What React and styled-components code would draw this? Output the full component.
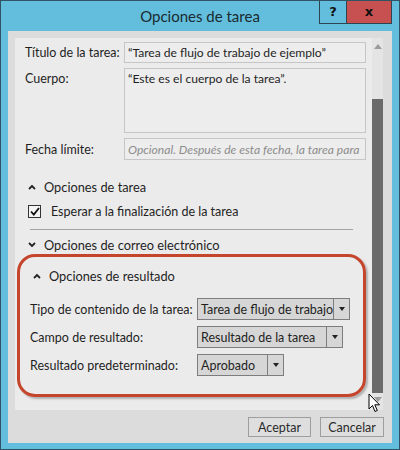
import React from "react";
import styled, { createGlobalStyle } from "styled-components";

const GlobalStyle = createGlobalStyle`
  html, body {
    margin: 0;
    padding: 0;
    background: #ffffff;
  }
  * {
    box-sizing: border-box;
  }
`;

const Window = styled.div`
  position: relative;
  width: 400px;
  height: 450px;
  background: #62bedc;
  border: 1px solid #2f5564;
  display: flex;
  flex-direction: column;
  font-family: Lato, "Open Sans", sans-serif;
  color: #1f1f1f;
  overflow: hidden;
`;

const TitleBar = styled.div`
  height: 30px;
  display: grid;
  grid-template-columns: 1fr auto 1fr;
  align-items: start;
`;

const Title = styled.div`
  grid-column: 2;
  font-size: 15px;
  line-height: 30px;
  color: #1a2a30;
`;

const Controls = styled.div`
  grid-column: 3;
  justify-self: end;
  display: flex;
  margin-right: 7px;
  margin-top: -1px;
`;

const CtrlButton = styled.div`
  width: ${({ $w }) => $w}px;
  height: 24px;
  background: ${({ $bg }) => $bg};
  border: 1px solid #2d4550;
  border-top: none;
  margin-left: -1px;
  display: flex;
  align-items: center;
  justify-content: center;
  font-family: "DejaVu Sans", sans-serif;
  font-weight: bold;
  font-size: 13px;
  color: #111;
`;

const Client = styled.div`
  flex: 1;
  margin: 0 7px 6px 7px;
  background: #dcdcdc;
  display: flex;
  flex-direction: column;
`;

const ContentArea = styled.div`
  display: flex;
  padding: 7px 9px 0 7px;
  height: 379px;
`;

const Panel = styled.div`
  flex: 1;
  background: #ebebeb;
  padding: 4px 6px 0 10px;
  overflow: hidden;
  font-size: 12.5px;
`;

const Scrollbar = styled.div`
  width: 11px;
  background: #e4e4e4;
  display: flex;
  flex-direction: column;
  align-items: center;
`;

const ScrollArrow = styled.div`
  width: 0;
  height: 0;
  border-left: 4px solid transparent;
  border-right: 4px solid transparent;
  ${({ $down }) => ($down ? "border-top: 5px solid #9c9c9c;" : "border-bottom: 5px solid #9c9c9c;")}
  margin: ${({ $down }) => ($down ? "4px 0 0" : "6px 0 0")};
`;

const Thumb = styled.div`
  width: 11px;
  height: 294px;
  margin-top: 50px;
  background: #6a6a6a;
`;

const FormGrid = styled.div`
  display: grid;
  grid-template-columns: 99px 1fr;
  row-gap: 5px;
`;

const Label = styled.div`
  padding-top: ${({ $top }) => ($top ? "3px" : "0")};
  align-self: ${({ $top }) => ($top ? "start" : "center")};
  white-space: nowrap;
`;

const Field = styled.div`
  height: ${({ $h }) => $h}px;
  background: #ededed;
  border: 1px solid #c6c6c6;
  padding: ${({ $top }) => ($top ? "2px 3px" : "0 3px")};
  display: flex;
  align-items: ${({ $top }) => ($top ? "flex-start" : "center")};
  white-space: nowrap;
  overflow: hidden;
  font-size: 12.1px;
  color: ${({ $placeholder }) => ($placeholder ? "#8c8c8c" : "#1f1f1f")};
  font-style: ${({ $placeholder }) => ($placeholder ? "italic" : "normal")};
`;

const SectionHeader = styled.div`
  height: 18px;
  display: flex;
  align-items: center;
  gap: 8px;
  margin-top: ${({ $mt }) => $mt}px;
  margin-left: 3px;
  font-size: 12.8px;
`;

const CheckRow = styled.div`
  display: flex;
  align-items: center;
  gap: 10px;
  height: 16px;
  margin-top: 7px;
  margin-left: 3px;
`;

const CheckBox = styled.div`
  width: 13px;
  height: 13px;
  border: 1px solid #333;
  background: #f4f4f4;
  display: flex;
  align-items: center;
  justify-content: center;
`;

const Separator = styled.div`
  height: 1px;
  background: #a3a3a3;
  margin: 10px 13px 0 5px;
`;

const Highlight = styled.div`
  margin: 0 0 0 -8px;
  border: 3px solid #c4452c;
  border-radius: 18px;
  padding: 10px 10px 18px 10px;
  box-shadow: 2px 2px 2px rgba(0, 0, 0, 0.25);
`;

const ResultGrid = styled.div`
  display: grid;
  grid-template-columns: 167px 1fr;
  row-gap: 6px;
  margin-top: 13px;
  align-items: center;
`;

const Dropdown = styled.div`
  display: flex;
  height: 22px;
  width: ${({ $w }) => $w}px;
  border: 1px solid #7d7d7d;
  background: #d6d6d6;
`;

const DropText = styled.div`
  flex: 1;
  padding: 0 3px;
  display: flex;
  align-items: center;
  white-space: nowrap;
  overflow: hidden;
`;

const DropArrow = styled.div`
  width: 16px;
  border-left: 1px solid #7d7d7d;
  display: flex;
  align-items: center;
  justify-content: center;
  &::after {
    content: "";
    border-left: 3.5px solid transparent;
    border-right: 3.5px solid transparent;
    border-top: 4px solid #222;
  }
`;

const ButtonRow = styled.div`
  display: flex;
  justify-content: flex-end;
  gap: 9px;
  padding: 7px 8px 0 0;
`;

const DialogButton = styled.div`
  width: ${({ $w }) => $w}px;
  height: 20px;
  border: 1px solid #9e9e9e;
  background: #dedede;
  display: flex;
  align-items: center;
  justify-content: center;
  font-size: 12.5px;
  color: #2a2a2a;
`;

const Cursor = styled.svg`
  position: absolute;
  left: 367px;
  top: 392px;
`;

const Chevron = ({ up }) => (
  <svg width="8" height="6" viewBox="0 0 8 6">
    <polyline
      points={up ? "1,5 4,2 7,5" : "1,1 4,4 7,1"}
      fill="none"
      stroke="#222"
      strokeWidth="1.8"
    />
  </svg>
);

const App = () => {
  return (
    <>
      <GlobalStyle />
      <Window>
        <TitleBar>
          <Title>Opciones de tarea</Title>
          <Controls>
            <CtrlButton $w={28} $bg="#62bedc">?</CtrlButton>
            <CtrlButton $w={46} $bg="#c75050">x</CtrlButton>
          </Controls>
        </TitleBar>
        <Client>
          <ContentArea>
            <Panel>
              <FormGrid>
                <Label>Título de la tarea:</Label>
                <Field $h={21}>“Tarea de flujo de trabajo de ejemplo”</Field>
                <Label $top>Cuerpo:</Label>
                <Field $h={65} $top>“Este es el cuerpo de la tarea”.</Field>
                <Label>Fecha límite:</Label>
                <Field $h={22} $placeholder>
                  Opcional. Después de esta fecha, la tarea para
                </Field>
              </FormGrid>

              <SectionHeader $mt={18}>
                <Chevron up />
                Opciones de tarea
              </SectionHeader>
              <CheckRow>
                <CheckBox>
                  <svg width="10" height="9" viewBox="0 0 10 9">
                    <polyline points="1,4.5 3.8,7.5 9,1" fill="none" stroke="#111" strokeWidth="1.8" />
                  </svg>
                </CheckBox>
                Esperar a la finalización de la tarea
              </CheckRow>
              <Separator />
              <SectionHeader $mt={6}>
                <Chevron />
                Opciones de correo electrónico
              </SectionHeader>

              <Highlight>
                <SectionHeader $mt={0}>
                  <Chevron up />
                  Opciones de resultado
                </SectionHeader>
                <ResultGrid>
                  <Label>Tipo de contenido de la tarea:</Label>
                  <Dropdown $w={153}>
                    <DropText>Tarea de flujo de trabajo</DropText>
                    <DropArrow />
                  </Dropdown>
                  <Label>Campo de resultado:</Label>
                  <Dropdown $w={146}>
                    <DropText>Resultado de la tarea</DropText>
                    <DropArrow />
                  </Dropdown>
                  <Label>Resultado predeterminado:</Label>
                  <Dropdown $w={87}>
                    <DropText>Aprobado</DropText>
                    <DropArrow />
                  </Dropdown>
                </ResultGrid>
              </Highlight>
            </Panel>
            <Scrollbar>
              <ScrollArrow />
              <Thumb />
              <ScrollArrow $down />
            </Scrollbar>
          </ContentArea>
          <ButtonRow>
            <DialogButton $w={63}>Aceptar</DialogButton>
            <DialogButton $w={64}>Cancelar</DialogButton>
          </ButtonRow>
        </Client>
        <Cursor width="13" height="21" viewBox="0 0 13 21">
          <path
            d="M1 1 L1 16 L4.5 12.5 L7 18.5 L9.3 17.5 L6.8 11.8 L11.5 11.8 Z"
            fill="#fff"
            stroke="#000"
            strokeWidth="1"
            strokeLinejoin="miter"
          />
        </Cursor>
      </Window>
    </>
  );
};

export default App;
